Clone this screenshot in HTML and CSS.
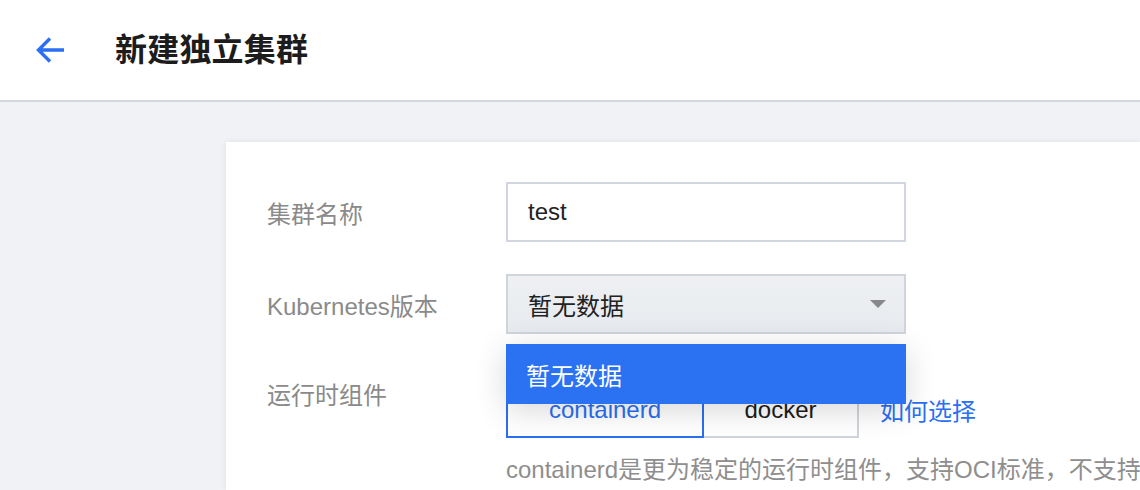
FILE: index.html
```html
<!DOCTYPE html>
<html lang="zh-CN">
<head>
<meta charset="utf-8">
<title>新建独立集群</title>
<link rel="stylesheet" href="styles.css">
</head>
<body>
<header class="topbar">
  <svg class="back" width="28" height="26" viewBox="0 0 28 26" aria-hidden="true">
    <path d="M14 1.5 L2.5 13 L14 24.5 M2.5 13 H28" fill="none" stroke="#2b6ff2" stroke-width="3.4" stroke-linecap="butt" stroke-linejoin="miter"/>
  </svg>
  <h1 class="title">新建独立集群</h1>
</header>
<main class="main">
  <section class="card">
    <div class="row">
      <div class="label">集群名称</div>
      <div class="input">test</div>
    </div>
    <div class="row">
      <div class="label">Kubernetes版本</div>
      <div class="select-wrap">
        <div class="select">
          <span>暂无数据</span>
          <span class="caret"></span>
        </div>
        <div class="dropdown">暂无数据</div>
      </div>
    </div>
    <div class="row row-top">
      <div class="label label-top">运行时组件</div>
      <div class="field">
        <div class="seg-line">
          <div class="seg">
            <div class="seg-btn active">containerd</div>
            <div class="seg-btn">docker</div>
          </div>
          <a class="link">如何选择</a>
        </div>
        <p class="desc">containerd是更为稳定的运行时组件，支持OCI标准，不支持</p>
      </div>
    </div>
  </section>
</main>
</body>
</html>
```

FILE: styles.css
```css
* { box-sizing: border-box; }
html, body {
  margin: 0;
  padding: 0;
  width: 1140px;
  height: 490px;
  overflow: hidden;
  background: #f1f2f6;
  font-family: "Liberation Sans", "Noto Sans CJK SC", sans-serif;
}
.topbar {
  height: 102px;
  background: #fff;
  border-bottom: 2px solid #d4d7df;
  display: flex;
  align-items: center;
  padding-left: 36px;
}
.back { display: block; }
.title {
  margin: 0 0 0 51px;
  font-size: 32px;
  font-weight: 700;
  color: #1c1c1c;
  line-height: 40px;
  letter-spacing: 0.2px;
}
.main {
  padding: 40px 0 0 226px;
  height: 388px;
  overflow: hidden;
}
.card {
  width: 914px;
  height: 348px;
  overflow: hidden;
  background: #fff;
  box-shadow: 0 0 6px rgba(0, 0, 0, 0.08);
  padding: 40px 0 0 41px;
}
.row {
  display: flex;
  align-items: center;
  margin-bottom: 32px;
}
.row-top {
  align-items: flex-start;
  margin-top: 44px;
}
.label {
  width: 239px;
  flex: none;
  font-size: 24px;
  color: #8a8a8a;
}
.label-top { line-height: 36px; }
.input {
  width: 400px;
  height: 60px;
  border: 2px solid #d2d6de;
  background: #fff;
  font-size: 24px;
  color: #222;
  display: flex;
  align-items: center;
  padding-left: 20px;
}
.select-wrap {
  position: relative;
  width: 400px;
}
.select {
  height: 60px;
  border: 2px solid #d0d4db;
  background: linear-gradient(#eef0f3, #e7eaee);
  font-size: 24px;
  color: #222;
  display: flex;
  align-items: center;
  justify-content: space-between;
  padding: 0 18px 0 20px;
}
.caret {
  width: 0;
  height: 0;
  border-left: 8px solid transparent;
  border-right: 8px solid transparent;
  border-top: 8px solid #888;
}
.dropdown {
  position: absolute;
  left: 0;
  top: 70px;
  width: 400px;
  height: 60px;
  background: #2b72f3;
  color: #fff;
  font-size: 24px;
  display: flex;
  align-items: center;
  padding-left: 20px;
  box-shadow: 0 6px 32px rgba(0, 0, 0, 0.16);
  z-index: 5;
}
.field { display: flex; flex-direction: column; }
.seg-line {
  display: flex;
  align-items: center;
  height: 60px;
}
.seg { display: flex; height: 60px; }
.seg-btn {
  height: 60px;
  display: flex;
  align-items: center;
  justify-content: center;
  font-size: 24px;
  color: #1c1c1c;
  background: #fff;
  border: 2px solid #d0d4db;
  border-left: none;
  width: 155px;
  padding-top: 4px;
}
.seg-btn.active {
  width: 198px;
  border: 2px solid #2b6ff2;
  color: #2b6ff2;
}
.link {
  margin-left: 21px;
  font-size: 24px;
  color: #2b6ff2;
  padding-top: 2px;
}
.desc {
  margin: 14px 0 0 0;
  font-size: 24px;
  line-height: 36px;
  color: #8e8e8e;
  white-space: nowrap;
}
```
